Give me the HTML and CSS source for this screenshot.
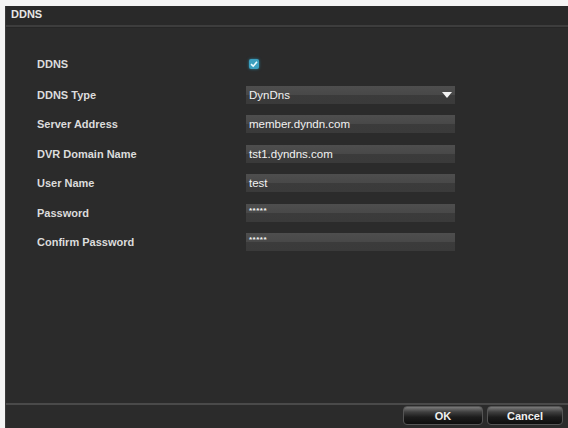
FILE: index.html
```html
<!DOCTYPE html>
<html>
<head>
  <title>DDNS</title>
  <link rel="stylesheet" href="styles.css">
</head>
<body>
<div class="window">
  <div class="title">DDNS</div>
  <form class="form">
    <div class="row first">
      <label>DDNS</label>
      <span class="check">
        <svg width="10" height="10" viewBox="0 0 10 10"><path d="M2 5.2 L4.2 7.2 L8 2.8" fill="none" stroke="#e8fbff" stroke-width="1.6"/></svg>
      </span>
    </div>
    <div class="row">
      <label>DDNS Type</label>
      <div class="field select">DynDns
        <svg class="arrow" width="10" height="8" viewBox="0 0 10 8"><path d="M0 1 H10 L5 7 Z" fill="#f2f2f2"/></svg>
      </div>
    </div>
    <div class="row">
      <label>Server Address</label>
      <div class="field">member.dyndn.com</div>
    </div>
    <div class="row">
      <label>DVR Domain Name</label>
      <div class="field">tst1.dyndns.com</div>
    </div>
    <div class="row">
      <label>User Name</label>
      <div class="field">test</div>
    </div>
    <div class="row">
      <label>Password</label>
      <div class="field pw">*****</div>
    </div>
    <div class="row">
      <label>Confirm Password</label>
      <div class="field pw">*****</div>
    </div>
  </form>
  <div class="footer">
    <button type="button" class="btn ok">OK</button>
    <button type="button" class="btn cancel">Cancel</button>
  </div>
</div>
</body>
</html>
```
FILE: styles.css
```css
body {
  margin: 0;
  background: #f4f4f4;
  font-family: "Liberation Sans", Arial, sans-serif;
}

.window {
  margin: 6px 0 0 5px;
  height: 422px;
  background: #2b2b2b;
  display: flex;
  flex-direction: column;
  border-left: 1px solid #3a3a3a;
}

.title {
  height: 19px;
  line-height: 17px;
  padding-left: 5px;
  font-size: 11px;
  font-weight: bold;
  color: #e6e6e6;
  background: #292929;
  border-bottom: 2px solid #3d3d3d;
}

.form {
  flex: 1;
  margin: 0;
  padding-top: 20px;
  border-top: 1px solid #262626;
}

.row {
  display: flex;
  align-items: center;
  height: 29.5px;
}

.row.first {
  height: 32px;
}

label {
  width: 209px;
  padding-left: 31px;
  font-size: 11px;
  font-weight: bold;
  color: #dcdcdc;
}

.check {
  width: 10px;
  height: 10px;
  margin-left: 3px;
  border-radius: 2px;
  background: #3b9fbf;
  box-shadow: 0 0 3px #2a7f99;
  display: flex;
}

.field {
  position: relative;
  width: 206px;
  height: 18px;
  line-height: 18px;
  padding-left: 3px;
  font-size: 11.5px;
  color: #f2f2f2;
  background: linear-gradient(#4e4e4e 0, #484848 50%, #3b3b3b 51%, #3a3a3a 100%);
}

.field.pw {
  font-size: 8px;
  font-weight: bold;
  letter-spacing: 0.5px;
  line-height: 13px;
}

.arrow {
  position: absolute;
  right: 3px;
  top: 5px;
}

.footer {
  height: 22px;
  border-top: 2px solid #4a4a4a;
  display: flex;
  justify-content: flex-end;
  gap: 4px;
  padding: 1px 5px 0 0;
}

.btn {
  height: 19px;
  border: 1px solid #555;
  border-radius: 4px;
  background: linear-gradient(#7a7a7a 0, #3e3e3e 30%, #1c1c1c 60%, #0e0e0e 100%);
  color: #f0f0f0;
  font-family: "Liberation Sans", Arial, sans-serif;
  font-size: 11px;
  font-weight: bold;
  padding: 0;
}

.ok {
  width: 80px;
}

.cancel {
  width: 76px;
}
```
